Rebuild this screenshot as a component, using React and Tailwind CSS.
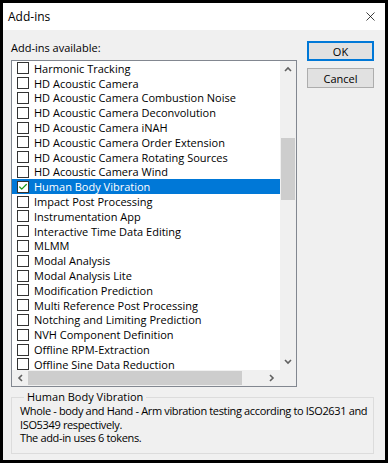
import { Check, X } from "lucide-react";

const ITEMS = [
  "Harmonic Tracking",
  "HD Acoustic Camera",
  "HD Acoustic Camera Combustion Noise",
  "HD Acoustic Camera Deconvolution",
  "HD Acoustic Camera iNAH",
  "HD Acoustic Camera Order Extension",
  "HD Acoustic Camera Rotating Sources",
  "HD Acoustic Camera Wind",
  "Human Body Vibration",
  "Impact Post Processing",
  "Instrumentation App",
  "Interactive Time Data Editing",
  "MLMM",
  "Modal Analysis",
  "Modal Analysis Lite",
  "Modification Prediction",
  "Multi Reference Post Processing",
  "Notching and Limiting Prediction",
  "NVH Component Definition",
  "Offline RPM-Extraction",
  "Offline Sine Data Reduction",
];

const SELECTED = "Human Body Vibration";

function Arrow({ dir }) {
  // small bold chevron like the win10 scrollbar arrows
  const paths = {
    up: "M1 5 L4 2 L7 5",
    down: "M1 2 L4 5 L7 2",
    left: "M5 1 L2 4 L5 7",
    right: "M2 1 L5 4 L2 7",
  };
  const vertical = dir === "up" || dir === "down";
  return (
    <svg
      width={vertical ? 8 : 7}
      height={vertical ? 7 : 8}
      viewBox={vertical ? "0 0 8 7" : "0 0 7 8"}
      className="block"
    >
      <path d={paths[dir]} fill="none" stroke="#606060" strokeWidth="1.6" />
    </svg>
  );
}

function Row({ label }) {
  const sel = label === SELECTED;
  return (
    <div
      className={`flex items-center h-[14.8px] pl-[5px] ${
        sel ? "bg-[#0078d7] text-white" : "text-black"
      }`}
    >
      <div className="w-[12px] h-[12px] border border-[#333] bg-white flex items-center justify-center shrink-0">
        {sel && <Check size={10} strokeWidth={3} className="text-[#1a9a1a]" />}
      </div>
      <span className="ml-[5px] whitespace-nowrap leading-none">{label}</span>
    </div>
  );
}

export default function App() {
  return (
    <div
      className="w-[388px] h-[463px] border-[3px] border-black bg-[#f0f0f0] flex flex-col text-[11px] text-black"
      style={{ fontFamily: '"Open Sans", "Noto Sans", sans-serif' }}
    >
      {/*Title bar*/}
      <div className="h-[27px] bg-white flex items-center justify-between pl-[5px] pr-[7px] shrink-0">
        <span className="text-[12px]">Add-ins</span>
        <X size={15} strokeWidth={1.2} className="text-black" />
      </div>

      <div className="flex-1 flex flex-col pl-[8px] pr-[11px] pt-[10px]">
        <div className="flex">
          <div className="flex flex-col">
            <div className="h-[15px] leading-[15px]">Add-ins available:</div>

            {/*List box*/}
            <div className="mt-[5px] w-[286px] h-[327px] border border-[#828790] bg-white flex flex-col">
              <div className="flex flex-1 min-h-0">
                <div className="flex-1 overflow-hidden">
                  {ITEMS.map((it) => (
                    <Row key={it} label={it} />
                  ))}
                </div>
                <div className="w-[16px] bg-[#f0f0f0] flex flex-col items-center">
                  <div className="h-[17px] flex items-center justify-center">
                    <Arrow dir="up" />
                  </div>
                  <div className="flex-1 w-full px-px">
                    <div className="mt-[60px] h-[62px] bg-[#cdcdcd]" />
                  </div>
                  <div className="h-[17px] flex items-center justify-center">
                    <Arrow dir="down" />
                  </div>
                </div>
              </div>
              <div className="h-[16px] flex bg-[#f0f0f0]">
                <div className="w-[16px] flex items-center justify-center">
                  <Arrow dir="left" />
                </div>
                <div className="flex-1 py-px">
                  <div className="w-[214px] h-full bg-[#cdcdcd]" />
                </div>
                <div className="w-[17px] flex items-center justify-center">
                  <Arrow dir="right" />
                </div>
                <div className="w-[16px] bg-[#f0f0f0]" />
              </div>
            </div>
          </div>

          {/*Buttons*/}
          <div className="ml-[10px] pt-px flex flex-col gap-[7px]">
            <button className="w-[67px] h-[20px] border-2 border-[#0078d7] bg-[#e1e1e1] leading-none">
              OK
            </button>
            <button className="w-[67px] h-[20px] border border-[#adadad] bg-[#e1e1e1] leading-none">
              Cancel
            </button>
          </div>
        </div>

        {/*Description group box*/}
        <fieldset className="mt-[4px] border border-[#dcdcdc] pl-[8px] pr-[4px] pb-[8px] pt-0 mx-0">
          <legend className="ml-[4px] px-[3px] leading-[12px]">Human Body Vibration</legend>
          <div className="leading-[13.5px] whitespace-nowrap tracking-[-0.35px] pt-[1px]">
            <div>Whole - body and Hand - Arm vibration testing according to ISO2631 and</div>
            <div>ISO5349 respectively.</div>
            <div>The add-in uses 6 tokens.</div>
          </div>
        </fieldset>
      </div>
    </div>
  );
}
